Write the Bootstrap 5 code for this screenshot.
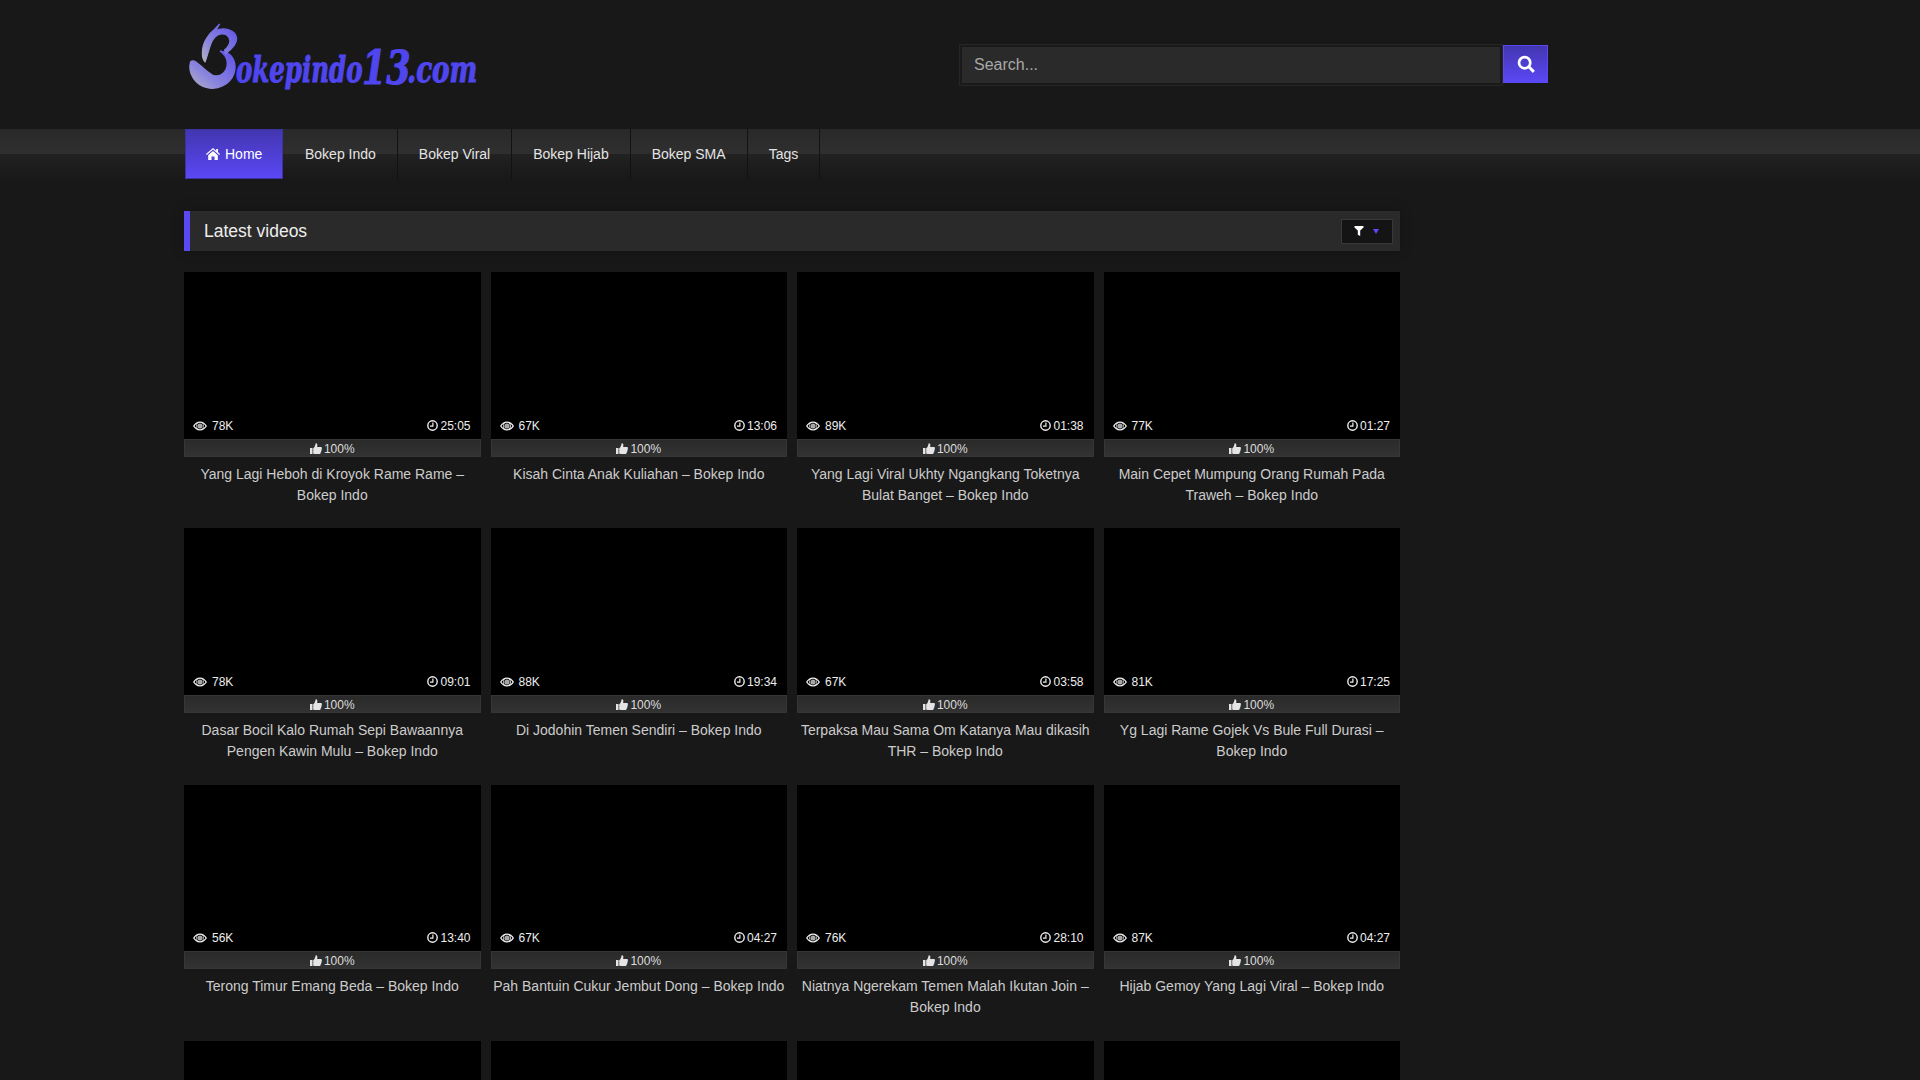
<!DOCTYPE html>
<html lang="id">
<head>
  <meta charset="UTF-8" />
  <meta name="viewport" content="width=device-width, initial-scale=1.0"/>
  <title>Bokepindo13.com</title>
  <link href="https://cdn.jsdelivr.net/npm/bootstrap@5.3.3/dist/css/bootstrap.min.css" rel="stylesheet">
  <style>
    body {
      background: #181818;
      color: #ccc;
      font-family: "Liberation Sans", Arial, sans-serif;
      font-size: 14px;
      line-height: 21px;
    }
    .site-wrap {
      width: 1552px;
      margin: 0 auto;
    }
    .site-head {
      height: 129px;
      padding-top: 15px;
      padding-right: 188px;
    }
    .logo-word {
      font-family: "DejaVu Serif", serif;
      font-weight: bold;
      font-style: italic;
      fill: #4f46ee;
      stroke: #4f46ee;
      stroke-width: 1.1px;
    }
    .search-box {
      width: 589px;
      margin-top: 29px;
      align-self: flex-start;
    }
    .search-field.form-control {
      height: 42px;
      width: 544px;
      flex: none;
      background: #2a2a2a;
      border: 1px solid #262626;
      border-radius: 0;
      box-shadow: inset 0 0 0 2px #1a1a1a;
      color: #ccc;
      font-size: 16px;
      padding: 0 14px;
    }
    .search-field::placeholder {
      color: #a8a8a8;
      opacity: 1;
    }
    .search-go {
      width: 45px;
      height: 38px;
      margin-top: 1px;
      padding: 0;
      border: 1px solid #5a48f5;
      border-radius: 0;
      background: linear-gradient(to bottom, #4236b0, #5b48f5);
    }
    .main-nav {
      height: 51px;
      background: linear-gradient(to bottom, #292929 0, #2f2f2f 25px, #222 25px, #181818 51px);
    }
    .main-nav .nav-link {
      height: 51px;
      padding: 0 21px;
      line-height: 50px;
      color: #e4e4e4;
      font-size: 14px;
      border-right: 1px solid #121212;
    }
    .main-nav .nav-item:first-child {
      margin-left: 1px;
    }
    .main-nav .nav-link.active-tab {
      width: 98px;
      height: 50px;
      color: #fff;
      background: linear-gradient(to bottom, #4236b0, #5b48f5);
      border: 1px solid #3c32a0;
      padding: 0 0 0 20px;
      line-height: 48px;
      margin-right: 1px;
      white-space: nowrap;
    }
    .nav-home {
      width: 14px;
      height: 12px;
      margin-right: 5px;
      vertical-align: -1px;
    }
    .content-col {
      width: 1216px;
      padding-top: 31px;
    }
    .list-head {
      height: 40px;
      background: #2a2a2a;
      border-left: 6px solid #5b48f5;
      box-shadow: 0 0 12px rgba(0,0,0,.25);
      padding: 0 7px 0 14px;
      margin-bottom: 21px;
      color: #eee;
      font-size: 17.5px;
    }
    .filter-btn {
      width: 52px;
      height: 25px;
      padding: 0 2px 0 0;
      background: #141414;
      border: 1px solid #383838;
      border-radius: 0;
    }
    .filter-caret {
      width: 0;
      height: 0;
      border-left: 3.5px solid transparent;
      border-right: 3.5px solid transparent;
      border-top: 5px solid #5b48f5;
      margin-left: 9px;
    }
    .vid-grid {
      --bs-gutter-x: 10px;
      --bs-gutter-y: 0;
    }
    .vid-item {
      margin-bottom: 22.77px;
    }
    .vid-thumb {
      aspect-ratio: 16 / 9;
      background: #000;
      position: relative;
    }
    .vid-stat {
      position: absolute;
      bottom: 2px;
      color: #eee;
      font-size: 12px;
      line-height: 21px;
    }
    .stat-views { left: 9px; }
    .stat-time { right: 10px; }
    .stat-views svg { width: 14px; height: 10px; margin-right: 5px; vertical-align: -1px; }
    .stat-time svg { width: 11px; height: 11px; margin-right: 2px; vertical-align: -1px; }
    .vid-rate {
      height: 18px;
      line-height: 18px;
      background: linear-gradient(to bottom, #2a2a2a, #323232);
      border: 1px solid #363636;
      color: #ddd;
      font-size: 12px;
    }
    .vid-rate svg { width: 12px; height: 11px; margin-right: 2px; vertical-align: -1px; }
    .vid-title {
      height: 42px;
      margin-top: 6.8px;
      padding: 0 2px;
      color: #ccc;
      text-align: center;
    }
  </style>
</head>
<body>
<svg width="0" height="0" class="position-absolute">
  <symbol id="ic-eye" viewBox="0 0 14 10">
    <path fill="#eee" fill-rule="evenodd" d="M7 .5C4 .5 1.600 2.300 0 5c1.600 2.700 4 4.500 7 4.500S12.400 7.700 14 5C12.400 2.300 10 .5 7 .5zM7 1.800a3.200 3.200 0 1 1 0 6.400 3.200 3.200 0 0 1 0-6.400zM1.500 5c.6-.9 1.400-1.700 2.300-2.300a4.300 4.300 0 0 0 0 4.600C2.900 6.700 2.100 5.900 1.500 5zM10.200 2.700c.9.600 1.700 1.400 2.300 2.300-.6.900-1.400 1.700-2.300 2.300a4.300 4.300 0 0 0 0-4.600z"/>
    <circle cx="7" cy="5" r="2.600" fill="#eee" opacity=".7"/>
  </symbol>
  <symbol id="ic-clock" viewBox="0 0 11 11">
    <circle cx="5.500" cy="5.500" r="4.700" fill="none" stroke="#eee" stroke-width="1.400"/>
    <path d="M5.900 2.600v3.500H3" fill="none" stroke="#eee" stroke-width="1.200"/>
  </symbol>
  <symbol id="ic-thumb" viewBox="0 0 12 11">
    <path fill="#e4e4e4" d="M0 5h2.500v6H0zM3.200 5.200C4.500 4.200 5.200 2.800 5.600.4c1.500-.4 2.100 1 1.500 3.600h3.800c1.400 0 1.400 1.500.6 2 .5.700.3 1.500-.3 1.900.2.800-.1 1.400-.6 1.600.1.900-.5 1.500-1.300 1.500H5.800c-1 0-1.700-.4-2.600-.6z"/>
  </symbol>
</svg>

<div class="site-wrap">
  <header class="site-head d-flex justify-content-between">
    <!-- logo: swan shaped B is drawn, the rest is normal text -->
    <svg width="300" height="80" viewBox="0 0 300 80" role="img" aria-label="Bokepindo13.com">
      <defs>
        <linearGradient id="swanFill" x1="0" y1="1" x2="1" y2="0">
          <stop offset="0" stop-color="#b4b2c4"/>
          <stop offset=".35" stop-color="#8a85dc"/>
          <stop offset="1" stop-color="#5f52ea"/>
        </linearGradient>
      </defs>
      <g transform="scale(.3333)" fill="url(#swanFill)" stroke="url(#swanFill)" stroke-width="4">
        <path d="M20 140C35 128 50 160 85 180 110 190 130 170 130 145 130 130 122 118 108 108L125 112C150 120 158 150 150 175 138 210 100 225 70 218 35 210 10 175 20 140Z"/>
        <path d="M107 27L95 47C120 35 155 45 158 70 158 90 140 105 125 115L122 105C135 95 142 80 135 68 125 50 100 55 88 72 75 92 72 120 63 140 52 130 52 95 68 70 75 58 85 48 93 42Z"/>
      </g>
      <text class="logo-word" transform="translate(52 67) scale(.7 1)" font-size="35">okepindo</text>
      <text class="logo-word" transform="translate(178 69) scale(.76 1)" font-size="46">13</text>
      <text class="logo-word" transform="translate(223 67) scale(.75 1)" font-size="35">.com</text>
    </svg>
    <form class="search-box d-flex">
      <input class="form-control search-field" type="text" placeholder="Search...">
      <button class="btn search-go d-flex align-items-center justify-content-center" type="button" aria-label="Search">
        <svg width="18" height="18" viewBox="0 0 16 16"><circle cx="6.800" cy="6.800" r="5" fill="none" stroke="#fff" stroke-width="2.400"/><path d="M10.500 10.500L15 15" stroke="#fff" stroke-width="2.600"/></svg>
      </button>
    </form>
  </header>
</div>

<nav class="main-nav">
  <div class="site-wrap">
    <ul class="nav">
      <li class="nav-item"><a class="nav-link active-tab" href="#"><svg class="nav-home" viewBox="0 0 14 12"><path fill="#fff" d="M7 0L0 6l.8.9L7 1.600l6.200 5.300.8-.9-2-1.700V1h-1.800v1.800zM2.200 7.200V12h3.300V8.500h3V12h3.300V7.200L7 3z"/></svg>Home</a></li>
      <li class="nav-item"><a class="nav-link" href="#">Bokep Indo</a></li>
      <li class="nav-item"><a class="nav-link" href="#">Bokep Viral</a></li>
      <li class="nav-item"><a class="nav-link" href="#">Bokep Hijab</a></li>
      <li class="nav-item"><a class="nav-link" href="#">Bokep SMA</a></li>
      <li class="nav-item"><a class="nav-link" href="#">Tags</a></li>
    </ul>
  </div>
</nav>

<div class="site-wrap">
  <main class="content-col">
    <div class="list-head d-flex align-items-center justify-content-between">
      <span>Latest videos</span>
      <button class="btn filter-btn d-flex align-items-center justify-content-center" type="button" aria-label="Filter">
        <svg width="10" height="10" viewBox="0 0 9 10"><path fill="#fff" d="M0 0h9v1.500L5.700 4.500V10L3.300 8.800V4.500L0 1.500z"/></svg>
        <span class="filter-caret"></span>
      </button>
    </div>
    <div id="videos" class="row row-cols-4 vid-grid"></div>
  </main>
</div>

<script src="https://cdn.jsdelivr.net/npm/bootstrap@5.3.3/dist/js/bootstrap.bundle.min.js"></script>
<script>
  const videos = [
    ['78K', '25:05', 'Yang Lagi Heboh di Kroyok Rame Rame – Bokep Indo'],
    ['67K', '13:06', 'Kisah Cinta Anak Kuliahan – Bokep Indo'],
    ['89K', '01:38', 'Yang Lagi Viral Ukhty Ngangkang Toketnya Bulat Banget – Bokep Indo'],
    ['77K', '01:27', 'Main Cepet Mumpung Orang Rumah Pada Traweh – Bokep Indo'],
    ['78K', '09:01', 'Dasar Bocil Kalo Rumah Sepi Bawaannya Pengen Kawin Mulu – Bokep Indo'],
    ['88K', '19:34', 'Di Jodohin Temen Sendiri – Bokep Indo'],
    ['67K', '03:58', 'Terpaksa Mau Sama Om Katanya Mau dikasih THR – Bokep Indo'],
    ['81K', '17:25', 'Yg Lagi Rame Gojek Vs Bule Full Durasi – Bokep Indo'],
    ['56K', '13:40', 'Terong Timur Emang Beda – Bokep Indo'],
    ['67K', '04:27', 'Pah Bantuin Cukur Jembut Dong – Bokep Indo'],
    ['76K', '28:10', 'Niatnya Ngerekam Temen Malah Ikutan Join – Bokep Indo'],
    ['87K', '04:27', 'Hijab Gemoy Yang Lagi Viral – Bokep Indo']
  ];

  let html = '';
  videos.forEach(v => {
    html += `<div class="col vid-item">
      <div class="vid-thumb">
        <span class="vid-stat stat-views"><svg><use href="#ic-eye"/></svg>${v[0]}</span>
        <span class="vid-stat stat-time"><svg><use href="#ic-clock"/></svg>${v[1]}</span>
      </div>
      <div class="vid-rate text-center"><svg><use href="#ic-thumb"/></svg>100%</div>
      <div class="vid-title">${v[2]}</div>
    </div>`;
  });
  // last row is cut off by the window, only the thumbs show
  for (let i = 0; i < 4; i++) {
    html += '<div class="col vid-item"><div class="vid-thumb"></div></div>';
  }
  document.getElementById('videos').innerHTML = html;
</script>
</body>
</html>
